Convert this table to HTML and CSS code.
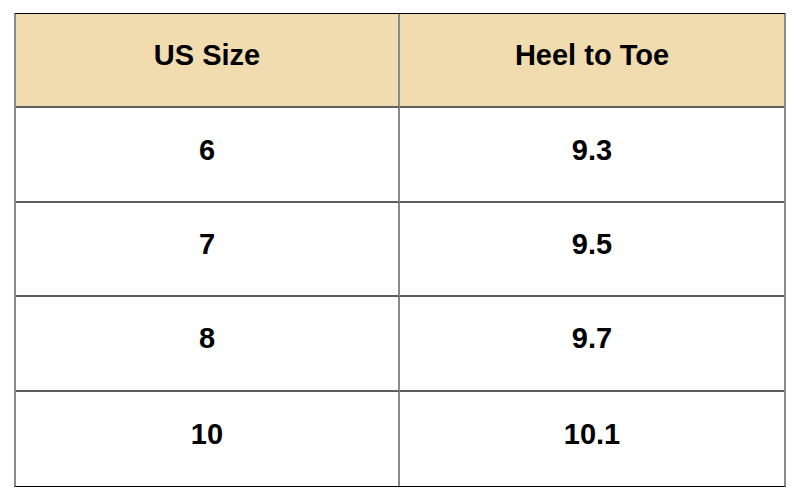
FILE: index.html
```html
<!DOCTYPE html>
<html>
<head>
<meta charset="utf-8">
<link rel="stylesheet" href="styles.css">
</head>
<body>
<div class="table">
  <div class="cell head left">US Size</div>
  <div class="cell head">Heel to Toe</div>
  <div class="cell left">6</div>
  <div class="cell">9.3</div>
  <div class="cell left">7</div>
  <div class="cell">9.5</div>
  <div class="cell left">8</div>
  <div class="cell">9.7</div>
  <div class="cell left last">10</div>
  <div class="cell last">10.1</div>
</div>
</body>
</html>
```
FILE: styles.css
```css
html, body {
  margin: 0;
  padding: 0;
  background: #ffffff;
}
.table {
  box-sizing: border-box;
  margin: 13px 0 0 14px;
  width: 772px;
  height: 474px;
  border-top: 1px solid #000;
  border-bottom: 1px solid #000;
  border-left: 2px solid #8a8a8a;
  border-right: 2px solid #8a8a8a;
  display: grid;
  grid-template-columns: 1fr 1fr;
  grid-template-rows: repeat(5, 1fr);
  font-family: "Liberation Sans", Arial, sans-serif;
  font-weight: bold;
  font-size: 29px;
  color: #000;
}
.cell {
  display: flex;
  align-items: center;
  justify-content: center;
  padding-bottom: 9px;
  border-bottom: 2px solid #5e5e5e;
  box-sizing: border-box;
}
.cell.last {
  border-bottom: none;
}
.cell.left {
  border-right: 2px solid #8a8a8a;
}
.head {
  background: #f1dcb0;
}
```
